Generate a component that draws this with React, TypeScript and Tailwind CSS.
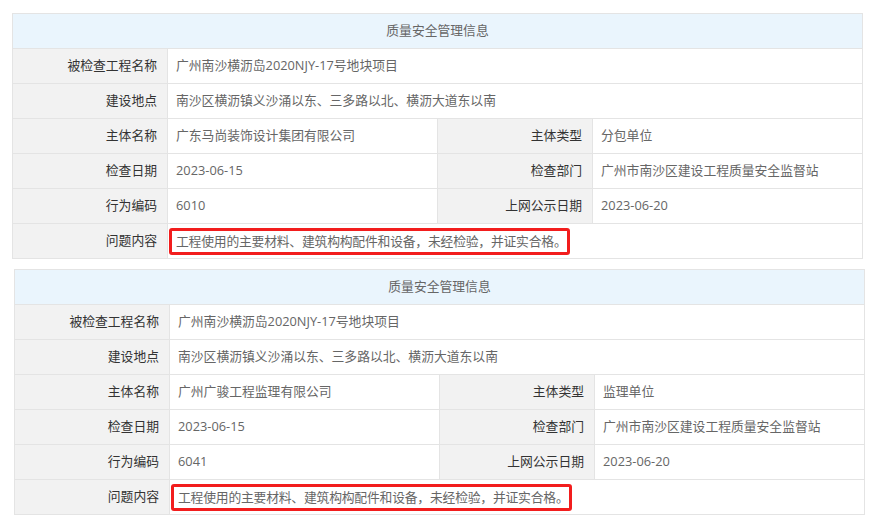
import React from 'react';

interface Record {
  project: string;
  location: string;
  subject: string;
  subjectType: string;
  checkDate: string;
  dept: string;
  code: string;
  publishDate: string;
  issue: string;
}

const records: Record[] = [
  {
    project: '广州南沙横沥岛2020NJY-17号地块项目',
    location: '南沙区横沥镇义沙涌以东、三多路以北、横沥大道东以南',
    subject: '广东马尚装饰设计集团有限公司',
    subjectType: '分包单位',
    checkDate: '2023-06-15',
    dept: '广州市南沙区建设工程质量安全监督站',
    code: '6010',
    publishDate: '2023-06-20',
    issue: '工程使用的主要材料、建筑构构配件和设备，未经检验，并证实合格。',
  },
  {
    project: '广州南沙横沥岛2020NJY-17号地块项目',
    location: '南沙区横沥镇义沙涌以东、三多路以北、横沥大道东以南',
    subject: '广州广骏工程监理有限公司',
    subjectType: '监理单位',
    checkDate: '2023-06-15',
    dept: '广州市南沙区建设工程质量安全监督站',
    code: '6041',
    publishDate: '2023-06-20',
    issue: '工程使用的主要材料、建筑构构配件和设备，未经检验，并证实合格。',
  },
];

function Label({ children }: { children: React.ReactNode }) {
  return (
    <td className="h-[35px] border border-[#e4e4e4] bg-[#f2f2f2] pr-[10px] text-right text-[#333]">
      {children}
    </td>
  );
}

function Value({ children, span = 1 }: { children: React.ReactNode; span?: number }) {
  return (
    <td colSpan={span} className="h-[35px] border border-[#e4e4e4] bg-white pl-[8px] text-left text-[#666]">
      {children}
    </td>
  );
}

function InfoTable({ r, className }: { r: Record; className: string }) {
  return (
    <table className={`table-fixed border-collapse ${className}`}>
      <colgroup>
        <col className="w-[155px]" />
        <col className="w-[270px]" />
        <col className="w-[155px]" />
        <col className="w-[270px]" />
      </colgroup>
      <tbody>
        <tr>
          <td colSpan={4} className="h-[35px] border border-[#e4e4e4] bg-[#eaf5fd] text-center text-[#666]">
            质量安全管理信息
          </td>
        </tr>
        <tr>
          <Label>被检查工程名称</Label>
          <Value span={3}>{r.project}</Value>
        </tr>
        <tr>
          <Label>建设地点</Label>
          <Value span={3}>{r.location}</Value>
        </tr>
        <tr>
          <Label>主体名称</Label>
          <Value>{r.subject}</Value>
          <Label>主体类型</Label>
          <Value>{r.subjectType}</Value>
        </tr>
        <tr>
          <Label>检查日期</Label>
          <Value>{r.checkDate}</Value>
          <Label>检查部门</Label>
          <Value>{r.dept}</Value>
        </tr>
        <tr>
          <Label>行为编码</Label>
          <Value>{r.code}</Value>
          <Label>上网公示日期</Label>
          <Value>{r.publishDate}</Value>
        </tr>
        <tr>
          <Label>问题内容</Label>
          <td colSpan={3} className="h-[35px] border border-[#e4e4e4] bg-white pl-[1px] text-left text-[#666]">
            <span className="inline-block rounded-[3px] border-[3px] border-[#f21d1d] py-[1px] pl-[4px] pr-0 leading-[19px] tracking-[-0.2px]">
              {r.issue}
            </span>
          </td>
        </tr>
      </tbody>
    </table>
  );
}

export default function App() {
  return (
    <div className="min-h-[528px] w-[878px] bg-white pt-[13px] font-['Open_Sans','Noto_Sans_CJK_SC',sans-serif] text-[12.8px]">
      <InfoTable r={records[0]} className="ml-[12px] w-[850px]" />
      <InfoTable r={records[1]} className="ml-[14px] mt-[10px] w-[849px]" />
    </div>
  );
}
